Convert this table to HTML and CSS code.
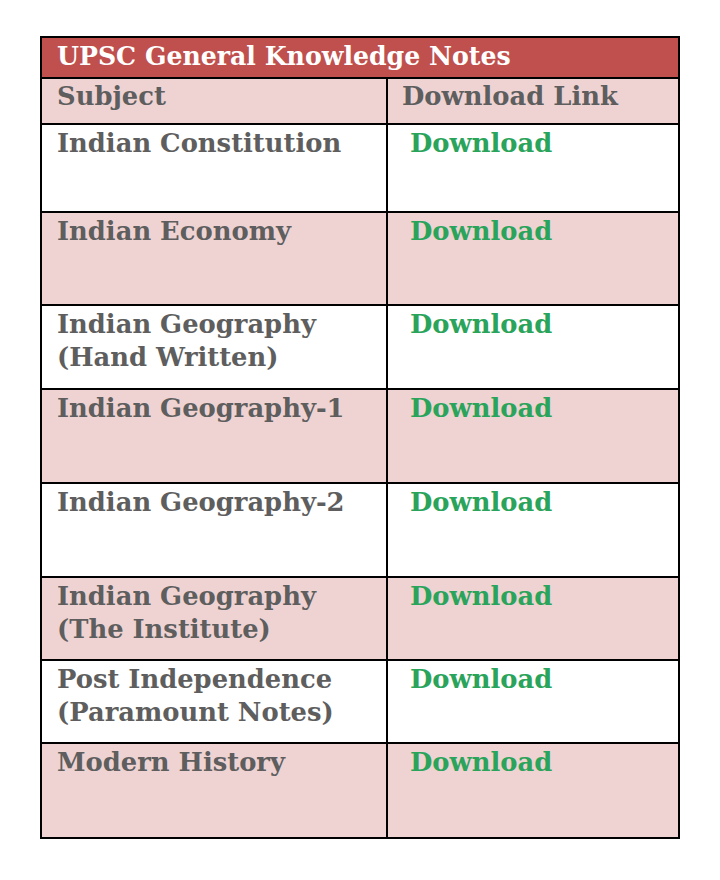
FILE: index.html
```html
<!DOCTYPE html>
<html lang="en">
<head>
<meta charset="utf-8">
<title>UPSC General Knowledge Notes</title>
<link rel="stylesheet" href="styles.css">
</head>
<body>
<table class="notes">
  <colgroup>
    <col class="col-subject">
    <col class="col-link">
  </colgroup>
  <thead>
    <tr class="title-row"><th colspan="2">UPSC General Knowledge Notes</th></tr>
    <tr class="head-row"><th>Subject</th><th class="link-head">Download Link</th></tr>
  </thead>
  <tbody>
    <tr class="r1"><td>Indian Constitution</td><td class="dl"><a href="#">Download</a></td></tr>
    <tr class="r2 alt"><td>Indian Economy</td><td class="dl"><a href="#">Download</a></td></tr>
    <tr class="r3"><td>Indian Geography<br>(Hand Written)</td><td class="dl"><a href="#">Download</a></td></tr>
    <tr class="r4 alt"><td>Indian Geography-1</td><td class="dl"><a href="#">Download</a></td></tr>
    <tr class="r5"><td>Indian Geography-2</td><td class="dl"><a href="#">Download</a></td></tr>
    <tr class="r6 alt"><td>Indian Geography<br>(The Institute)</td><td class="dl"><a href="#">Download</a></td></tr>
    <tr class="r7"><td>Post Independence<br>(Paramount Notes)</td><td class="dl"><a href="#">Download</a></td></tr>
    <tr class="r8 alt"><td>Modern History</td><td class="dl"><a href="#">Download</a></td></tr>
  </tbody>
</table>
</body>
</html>
```
FILE: styles.css
```css
html, body {
  margin: 0;
  padding: 0;
  background: #ffffff;
}

body {
  padding: 36px 0 0 40px;
  font-family: "DejaVu Serif", "Liberation Serif", serif;
}

.notes {
  border-collapse: collapse;
  width: 638px;
  table-layout: fixed;
  font-size: 25.8px;
  font-weight: bold;
  line-height: 33px;
  color: #5e5e5e;
}

.col-subject { width: 346px; }
.col-link { width: 292px; }

.notes th,
.notes td {
  border: 2px solid #000;
  padding: 2px 15px 0;
  text-align: left;
  vertical-align: top;
}

.title-row th {
  background: #c0504d;
  color: #ffffff;
  height: 37px;
  padding-top: 2px;
  font-size: 25.2px;
}

.head-row th {
  background: #efd3d3;
  height: 43px;
  padding-top: 1px;
}

.notes .link-head { padding-left: 14px; }

.alt td { background: #efd3d3; }

.notes td.dl { padding-left: 22px; }

.dl a {
  color: #2ba45b;
  text-decoration: none;
}

.r1 td { height: 84px; }
.r2 td { height: 89px; }
.r3 td { height: 80px; }
.r4 td { height: 90px; }
.r5 td { height: 90px; }
.r6 td { height: 79px; }
.r7 td { height: 79px; }
.r8 td { height: 91px; }
```
